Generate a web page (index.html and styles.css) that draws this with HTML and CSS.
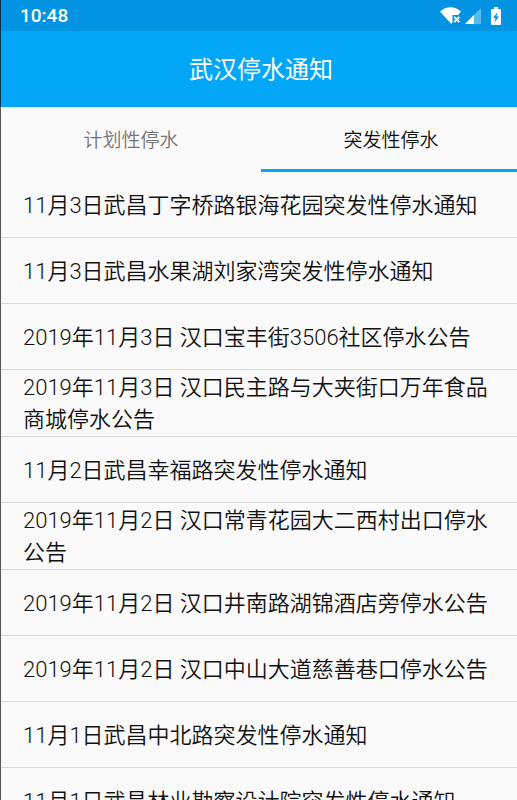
FILE: index.html
```html
<!DOCTYPE html>
<html lang="zh-CN">
<head>
  <meta charset="UTF-8" />
  <meta name="viewport" content="width=device-width, initial-scale=1" />
  <title>武汉停水通知</title>
  <link rel="stylesheet" href="styles.css">
</head>
<body>

<div class="app">
  <div class="status-bar">
    <span class="clock">10:48</span>
    <div class="status-icons">
      <svg class="icon-wifi" width="22" height="18" viewBox="0 0 22 18">
        <path d="M0 4.500C6-1.200 15-1.200 21 4.500L18.300 8H12.500V15.200L11.300 17Z" fill="#fff"/>
        <path d="M14.300 9.800L19.300 15.200M19.300 9.800L14.300 15.200" stroke="#fff" stroke-width="1.900"/>
      </svg>
      <svg class="icon-signal" width="16" height="16" viewBox="0 0 16 16">
        <path d="M0 16L16 0V16Z" fill="#fff" opacity="0.350"/>
        <path d="M0 16L9 7V16Z" fill="#fff"/>
      </svg>
      <svg class="icon-battery" width="10" height="18" viewBox="0 0 10 18">
        <path d="M3 0H7V2H9Q10 2 10 3V17Q10 18 9 18H1Q0 18 0 17V3Q0 2 1 2H3Z" fill="#fff"/>
        <path d="M6.500 5L2 11H4.500L3.500 15.500L8 9.500H5.500Z" fill="#0294e3"/>
      </svg>
    </div>
  </div>

  <header class="app-bar">
    <h1>武汉停水通知</h1>
  </header>

  <div class="tabs" role="tablist">
    <button class="tab" type="button" role="tab" aria-selected="false">计划性停水</button>
    <button class="tab active" type="button" role="tab" aria-selected="true">突发性停水</button>
  </div>

  <ul class="notice-list">
    <li><a href="#">11月3日武昌丁字桥路银海花园突发性停水通知</a></li>
    <li><a href="#">11月3日武昌水果湖刘家湾突发性停水通知</a></li>
    <li><a href="#">2019年11月3日 汉口宝丰街3506社区停水公告</a></li>
    <li><a href="#">2019年11月3日 汉口民主路与大夹街口万年食品商城停水公告</a></li>
    <li><a href="#">11月2日武昌幸福路突发性停水通知</a></li>
    <li><a href="#">2019年11月2日 汉口常青花园大二西村出口停水公告</a></li>
    <li><a href="#">2019年11月2日 汉口井南路湖锦酒店旁停水公告</a></li>
    <li><a href="#">2019年11月2日 汉口中山大道慈善巷口停水公告</a></li>
    <li><a href="#">11月1日武昌中北路突发性停水通知</a></li>
    <li><a href="#">11月1日武昌林业勘察设计院突发性停水通知</a></li>
  </ul>
</div>

<script>
  const tabs = document.querySelectorAll('.tab');

  tabs.forEach(tab => {
    tab.addEventListener('click', () => {
      tabs.forEach(t => {
        t.classList.toggle('active', t === tab);
        t.setAttribute('aria-selected', t === tab);
      });
    });
  });
</script>

</body>
</html>
```
FILE: styles.css
```css
* {
  box-sizing: border-box;
}
body {
  margin: 0;
  overflow: hidden;
  background: #fafafa;
  color: #111;
  font-family: Roboto, "Noto Sans CJK SC", sans-serif;
  font-weight: 350;
}
.app {
  display: flex;
  flex-direction: column;
  height: 100vh;
  margin-right: -4px;
}
.status-bar,
.app-bar,
.tabs,
.notice-list {
  border-left: 1px solid rgba(0, 0, 0, 0.65);
}
.status-bar {
  display: flex;
  justify-content: space-between;
  align-items: center;
  flex: none;
  height: 31px;
  padding: 0 20px 0 19px;
  background: #0294e3;
  color: #fff;
}
.clock {
  font-size: 19px;
  font-weight: 500;
}
.status-icons {
  display: flex;
  align-items: center;
}
.icon-signal {
  margin-left: 3px;
}
.icon-battery {
  margin-left: 10px;
}
.app-bar {
  display: flex;
  justify-content: center;
  align-items: center;
  flex: none;
  height: 76px;
  padding-bottom: 4px;
  background: #02a7f8;
  color: #fff;
}
h1 {
  margin: 0;
  font-size: 24px;
  font-weight: 400;
}
.tabs {
  display: flex;
  flex: none;
  height: 65px;
}
.tab {
  flex: 1;
  padding: 0;
  border: none;
  border-bottom: 3px solid transparent;
  background: none;
  color: #757575;
  font-family: inherit;
  font-size: 19px;
  font-weight: inherit;
  cursor: pointer;
}
.tab.active {
  border-bottom-color: #02a7f8;
  color: #111;
}
.notice-list {
  flex: 1;
  margin: 0;
  padding: 0;
  list-style: none;
  overflow-y: auto;
  scrollbar-width: none;
}
.notice-list a {
  display: flex;
  align-items: center;
  min-height: 66px;
  padding: 2px 26px 0 22px;
  border-bottom: 1px solid #dadada;
  color: inherit;
  font-size: 22px;
  line-height: 32px;
  text-decoration: none;
}
```
